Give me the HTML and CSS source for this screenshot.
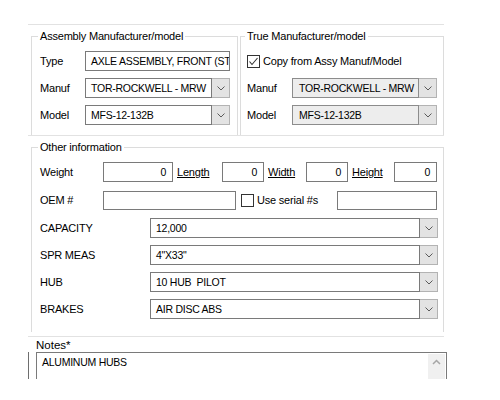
FILE: index.html
```html
<!DOCTYPE html>
<html>
<head>
<meta charset="utf-8">
<title>Axle assembly</title>
<link rel="stylesheet" href="styles.css">
</head>
<body>
<div class="sheet">
  <!-- manufacturer / model -->
  <div class="panel top">
    <fieldset class="group assy">
      <legend>Assembly Manufacturer/model</legend>
      <div class="row">
        <span class="lbl">Type</span>
        <div class="box">AXLE ASSEMBLY, FRONT (ST</div>
      </div>
      <div class="row">
        <span class="lbl">Manuf</span>
        <div class="combo">
          <div class="box">TOR-ROCKWELL - MRW</div>
          <span class="drop"><svg width="8" height="5" viewBox="0 0 8 5"><polyline points="0.5,0.5 4,4 7.5,0.5"/></svg></span>
        </div>
      </div>
      <div class="row">
        <span class="lbl">Model</span>
        <div class="combo">
          <div class="box">MFS-12-132B</div>
          <span class="drop"><svg width="8" height="5" viewBox="0 0 8 5"><polyline points="0.5,0.5 4,4 7.5,0.5"/></svg></span>
        </div>
      </div>
    </fieldset>

    <fieldset class="group truemfr">
      <legend>True Manufacturer/model</legend>
      <div class="row">
        <label class="check">
          <span class="tick on"><svg width="11" height="11" viewBox="0 0 11 11"><polyline points="1.5,5.5 4,8.5 9.5,2"/></svg></span>
          Copy from Assy Manuf/Model
        </label>
      </div>
      <div class="row">
        <span class="lbl">Manuf</span>
        <div class="combo locked">
          <div class="box">TOR-ROCKWELL - MRW</div>
          <span class="drop"><svg width="8" height="5" viewBox="0 0 8 5"><polyline points="0.5,0.5 4,4 7.5,0.5"/></svg></span>
        </div>
      </div>
      <div class="row">
        <span class="lbl">Model</span>
        <div class="combo locked">
          <div class="box">MFS-12-132B</div>
          <span class="drop"><svg width="8" height="5" viewBox="0 0 8 5"><polyline points="0.5,0.5 4,4 7.5,0.5"/></svg></span>
        </div>
      </div>
    </fieldset>
  </div>

  <!-- other information -->
  <div class="panel other">
    <fieldset class="group info">
      <legend>Other information</legend>
      <div class="dims">
        <span class="lbl">Weight</span>
        <div class="box num">0</div>
        <a class="link" href="#">Length</a>
        <div class="box num">0</div>
        <a class="link" href="#">Width</a>
        <div class="box num">0</div>
        <a class="link" href="#">Height</a>
        <div class="box num">0</div>
      </div>
      <div class="oem">
        <span class="lbl">OEM #</span>
        <div class="box"></div>
        <label class="check">
          <span class="tick"></span>
          Use serial #s
        </label>
        <div class="box"></div>
      </div>
      <div class="spec">
        <span class="lbl">CAPACITY</span>
        <div class="combo">
          <div class="box">12,000</div>
          <span class="drop"><svg width="8" height="5" viewBox="0 0 8 5"><polyline points="0.5,0.5 4,4 7.5,0.5"/></svg></span>
        </div>
      </div>
      <div class="spec">
        <span class="lbl">SPR MEAS</span>
        <div class="combo">
          <div class="box">4"X33"</div>
          <span class="drop"><svg width="8" height="5" viewBox="0 0 8 5"><polyline points="0.5,0.5 4,4 7.5,0.5"/></svg></span>
        </div>
      </div>
      <div class="spec">
        <span class="lbl">HUB</span>
        <div class="combo">
          <div class="box">10 HUB&nbsp; PILOT</div>
          <span class="drop"><svg width="8" height="5" viewBox="0 0 8 5"><polyline points="0.5,0.5 4,4 7.5,0.5"/></svg></span>
        </div>
      </div>
      <div class="spec">
        <span class="lbl">BRAKES</span>
        <div class="combo">
          <div class="box">AIR DISC ABS</div>
          <span class="drop"><svg width="8" height="5" viewBox="0 0 8 5"><polyline points="0.5,0.5 4,4 7.5,0.5"/></svg></span>
        </div>
      </div>
    </fieldset>
  </div>

  <!-- notes -->
  <div class="notes-title">Notes*</div>
  <div class="notes">
    <div class="memo">
      <div class="memo-text">ALUMINUM HUBS</div>
      <span class="vscroll"><svg width="9" height="6" viewBox="0 0 9 6"><polyline points="1,5 4.5,1.5 8,5"/></svg></span>
    </div>
  </div>
</div>
</body>
</html>
```

FILE: styles.css
```css
*{
    margin: 0;
    padding: 0;
    box-sizing: border-box;
}
body{
    background: #fff;
    color: #000;
    font: 11px/14px "Liberation Sans", Arial, sans-serif;
    letter-spacing: -0.2px;
}
.sheet{
    width: 500px;
    height: 400px;
    padding: 24px 0 0 28px;
}
.panel{
    width: 416px;
}

/* 上面一块 两个分组框左右排 */
.top{
    display: flex;
    gap: 2px;
    height: 112px;
    padding-left: 3px;
    border-top: 1px solid #e2e2e2;
    border-bottom: 1px solid #e2e2e2;
}
.group{
    margin-top: 4px;
    border: 1px solid #dcdcdc;
    border-bottom: none;
    min-width: 0;
}
.group legend{
    line-height: 14px;
    padding: 0 2px;
    margin-left: -2px;
}
.assy{
    width: 207px;
    height: 106px;
    padding-left: 8px;
}
.truemfr{
    width: 204px;
    height: 106px;
    padding-left: 6px;
}
.row{
    display: flex;
    align-items: center;
    height: 20px;
}
.row:first-of-type{
    margin-top: 8px;
}
.row + .row{
    margin-top: 7px;
}
.row .lbl{
    width: 45px;
    flex: none;
}
.assy .box,
.assy .combo,
.truemfr .combo{
    width: 145px;
}

/* 文本框  内容多是大写 字号略小一点 */
.box{
    height: 20px;
    border: 1px solid #7a7a7a;
    background: #fff;
    padding-left: 5px;
    font-size: 10.5px;
    letter-spacing: -0.25px;
    line-height: 18px;
    white-space: nowrap;
    overflow: hidden;
}
.num{
    text-align: right;
    padding: 0 6px 0 0;
}

/* 下拉框 = 文本框 + 右侧按钮 */
.combo{
    display: flex;
    height: 20px;
}
.combo .box{
    flex: 1;
    min-width: 0;
}
.drop{
    width: 18px;
    flex: none;
    display: flex;
    align-items: center;
    justify-content: center;
    background: #e3e3e3;
    border: 1px solid #b3b3b3;
    border-left: none;
}
.drop svg polyline{
    fill: none;
    stroke: #5a5a5a;
    stroke-width: 1;
}
.locked .box{
    background: #ededed;
    border-color: #8c8c8c;
    padding-left: 6px;
}

/* 复选框 */
.check{
    display: flex;
    align-items: center;
    gap: 3px;
}
.tick{
    width: 13px;
    height: 13px;
    flex: none;
    border: 1px solid #333;
    background: #fff;
    display: flex;
    align-items: center;
    justify-content: center;
}
.tick svg polyline{
    fill: none;
    stroke: #333;
    stroke-width: 1.1;
}

/* 其他信息 */
.other{
    height: 197px;
    padding-left: 3px;
    border-bottom: 1px solid #e2e2e2;
}
.info{
    width: 413px;
    height: 192px;
    padding-left: 8px;
}
.dims,
.oem,
.spec{
    display: grid;
    align-items: center;
    height: 20px;
}
.dims{
    grid-template-columns: 63px 70px 49px 42px 42px 42px 46px 43px;
    margin-top: 8px;
}
.link{
    color: #000;
    text-decoration: underline;
    padding-left: 4px;
}
.oem{
    grid-template-columns: 63px 133px 101px 100px;
    margin-top: 8px;
}
.oem .box{
    height: 19px;
}
.oem .check{
    padding-left: 5px;
}
.spec{
    grid-template-columns: 110px 288px;
    margin-top: 7px;
}
.oem + .spec{
    margin-top: 8px;
}

/* 备注 */
.notes-title{
    margin-top: 2px;
    padding-left: 8px;
    font-size: 11.5px;
    letter-spacing: 0;
    line-height: 13px;
}
.notes{
    width: 419px;
    height: 27px;
    overflow: hidden;
    border-left: 1px solid #6e6e6e;
    padding-left: 7px;
}
.memo{
    display: flex;
    width: 411px;
    height: 60px;
    border: 1px solid #7a7a7a;
}
.memo-text{
    flex: 1;
    padding: 2px 0 0 5px;
    font-size: 10.5px;
    letter-spacing: -0.25px;
    line-height: 14px;
}
.vscroll{
    width: 17px;
    height: 40px;
    margin: 1px 1px 0 0;
    background: #f0f0f0;
    display: flex;
    justify-content: center;
    padding-top: 5px;
}
.vscroll svg polyline{
    fill: none;
    stroke: #a6a6a6;
    stroke-width: 1.5;
}
```
